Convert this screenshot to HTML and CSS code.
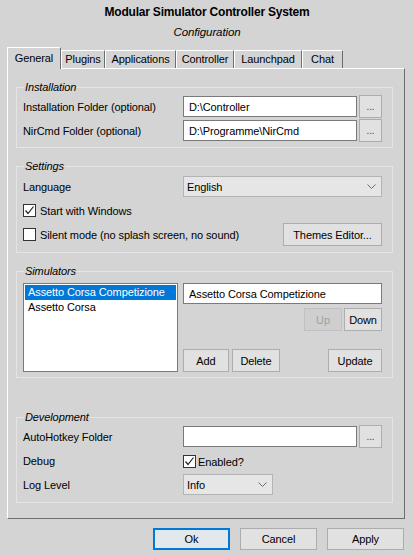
FILE: index.html
```html
<!DOCTYPE html>
<html>
<head>
<meta charset="utf-8">
<title>Configuration</title>
<link rel="stylesheet" href="styles.css">
</head>
<body>
<div class="window">
  <div class="title">Modular Simulator Controller System</div>
  <div class="subtitle">Configuration</div>
  <div class="tabs">
    <div class="tab active t-general">General</div>
    <div class="tab t-plugins">Plugins</div>
    <div class="tab t-apps">Applications</div>
    <div class="tab t-controller">Controller</div>
    <div class="tab t-launchpad">Launchpad</div>
    <div class="tab t-chat">Chat</div>
  </div>
  <div class="panel">
    <fieldset class="group g-install">
      <legend>Installation</legend>
      <div class="rows">
        <div class="row">
          <span class="label">Installation Folder (optional)</span>
          <div class="path">
            <input class="text path-input" value="D:\Controller" readonly>
            <button class="btn browse">...</button>
          </div>
        </div>
        <div class="row">
          <span class="label">NirCmd Folder (optional)</span>
          <div class="path">
            <input class="text path-input" value="D:\Programme\NirCmd" readonly>
            <button class="btn browse">...</button>
          </div>
        </div>
      </div>
    </fieldset>

    <fieldset class="group g-settings">
      <legend>Settings</legend>
      <div class="rows">
        <div class="row">
          <span class="label">Language</span>
          <div class="select">
            <span>English</span>
            <svg class="chev" width="9" height="5" viewBox="0 0 9 5"><polyline points="0.5,0.5 4.5,4.5 8.5,0.5" fill="none" stroke="#6b6b6b" stroke-width="1"/></svg>
          </div>
        </div>
        <div class="row-free">
          <label class="checkline">
            <span class="check"><svg width="11" height="11" viewBox="0 0 11 11"><polyline points="1.5,5.5 4,8.5 9.5,1.5" fill="none" stroke="#222" stroke-width="1.2"/></svg></span>
            <span>Start with Windows</span>
          </label>
        </div>
        <div class="row-free">
          <label class="checkline">
            <span class="check"></span>
            <span>Silent mode (no splash screen, no sound)</span>
          </label>
          <button class="btn themes">Themes Editor...</button>
        </div>
      </div>
    </fieldset>

    <fieldset class="group g-sims">
      <legend>Simulators</legend>
      <div class="sims">
        <div class="listbox">
          <div class="item selected">Assetto Corsa Competizione</div>
          <div class="item">Assetto Corsa</div>
        </div>
        <div class="sim-side">
          <input class="text sim-input" value="Assetto Corsa Competizione" readonly>
          <div class="updown">
            <button class="btn small disabled">Up</button>
            <button class="btn small">Down</button>
          </div>
          <div class="actions">
            <button class="btn add">Add</button>
            <button class="btn del">Delete</button>
            <button class="btn upd">Update</button>
          </div>
        </div>
      </div>
    </fieldset>

    <fieldset class="group g-dev">
      <legend>Development</legend>
      <div class="rows">
        <div class="row">
          <span class="label">AutoHotkey Folder</span>
          <div class="path">
            <input class="text path-input" value="" readonly>
            <button class="btn browse">...</button>
          </div>
        </div>
        <div class="row">
          <span class="label">Debug</span>
          <label class="checkline tight">
            <span class="check"><svg width="11" height="11" viewBox="0 0 11 11"><polyline points="1.5,5.5 4,8.5 9.5,1.5" fill="none" stroke="#222" stroke-width="1.2"/></svg></span>
            <span>Enabled?</span>
          </label>
        </div>
        <div class="row">
          <span class="label">Log Level</span>
          <div class="select short">
            <span>Info</span>
            <svg class="chev" width="9" height="5" viewBox="0 0 9 5"><polyline points="0.5,0.5 4.5,4.5 8.5,0.5" fill="none" stroke="#6b6b6b" stroke-width="1"/></svg>
          </div>
        </div>
      </div>
    </fieldset>
  </div>
  <div class="footer">
    <button class="btn foot default">Ok</button>
    <button class="btn foot">Cancel</button>
    <button class="btn foot">Apply</button>
  </div>
</div>
</body>
</html>
```
FILE: styles.css
```css
* { box-sizing: border-box; }
html, body { margin: 0; padding: 0; }
body {
  background: #d4d4d4;
  font-family: "Liberation Sans", Arial, sans-serif;
  font-size: 11px;
  letter-spacing: -0.1px;
  color: #000;
  width: 414px;
  height: 556px;
  overflow: hidden;
}
.window { display: flex; flex-direction: column; padding-top: 5px; }
.title {
  font-weight: bold;
  font-size: 12px;
  line-height: 14px;
  text-align: center;
  letter-spacing: -0.2px;
}
.subtitle {
  font-style: italic;
  font-size: 11.5px;
  line-height: 14px;
  text-align: center;
  margin-top: 6px;
}
.tabs {
  display: flex;
  align-items: flex-end;
  height: 21px;
  margin: 8px 0 0 7px;
}
.tab {
  height: 18px;
  line-height: 17px;
  text-align: center;
  border-top: 1px solid #fff;
  border-left: 1px solid #fff;
  border-right: 1px solid #6e6e6e;
  background: #d4d4d4;
}
.tab.active {
  height: 22px;
  line-height: 20px;
  margin-bottom: -1px;
  position: relative;
  z-index: 1;
}
.t-general { width: 54px; }
.t-plugins { width: 44px; }
.t-apps { width: 71px; }
.t-controller { width: 58px; }
.t-launchpad { width: 68px; }
.t-chat { width: 41px; }

.panel {
  margin: 0 9px 0 7px;
  height: 451px;
  border-top: 1px solid #fff;
  border-left: 1px solid #fff;
  border-right: 1px solid #6e6e6e;
  border-bottom: 1px solid #6e6e6e;
  padding: 11px 11px 0 8px;
  display: flex;
  flex-direction: column;
}
.group {
  margin: 0;
  min-width: 0;
  border: 1px solid #e4e4e4;
  padding: 0 10px 0 6px;
}
.group legend {
  font-style: italic;
  line-height: 14px;
  padding: 0 1px;
  margin-left: 1px;
}
.g-install { padding-top: 1px; padding-bottom: 5px; }
.g-settings { margin-top: 11px; padding-top: 2px; padding-bottom: 6px; }
.g-sims { margin-top: 11px; padding-top: 5px; padding-bottom: 5px; }
.g-dev { margin-top: 32px; padding-top: 1px; padding-bottom: 6px; }

.rows { display: flex; flex-direction: column; gap: 1px; }
.row {
  display: grid;
  grid-template-columns: 160px 199px;
  align-items: center;
  height: 23px;
}
.row-free {
  display: flex;
  align-items: center;
  justify-content: space-between;
  height: 23px;
}
.label { white-space: nowrap; }

.path { display: flex; align-items: center; gap: 2px; }
.text {
  height: 21px;
  border: 1px solid #7a7a7a;
  background: #fff;
  padding: 0 5px;
  font: inherit;
  letter-spacing: inherit;
  color: #000;
  outline: none;
  margin: 0;
}
.path-input { width: 174px; }

.btn {
  font: inherit;
  letter-spacing: inherit;
  color: #000;
  background: #e1e1e1;
  border: 1px solid #adadad;
  padding: 0;
  margin: 0;
  height: 23px;
}
.browse { width: 23px; color: #444; font-size: 10px; }
.themes { width: 99px; }

.select {
  height: 21px;
  border: 1px solid #b4b4b4;
  background: #e6e6e6;
  display: flex;
  align-items: center;
  justify-content: space-between;
  padding: 0 5px 0 3px;
}
.select.short { width: 90px; }

.checkline { display: flex; align-items: center; gap: 4px; }
.checkline.tight { gap: 2px; padding-top: 2px; }
.check {
  width: 13px;
  height: 13px;
  border: 1px solid #333;
  background: #fff;
  display: flex;
  align-items: center;
  justify-content: center;
  flex: none;
}

.sims {
  display: grid;
  grid-template-columns: 155px 199px;
  column-gap: 5px;
  height: 89px;
}
.listbox {
  border: 1px solid #7a7a7a;
  background: #fff;
  padding: 1px;
}
.item { line-height: 15px; padding-left: 3px; white-space: nowrap; }
.item.selected { background: #0078d7; color: #fff; }
.sim-side { display: flex; flex-direction: column; }
.sim-input { width: 199px; }
.updown { display: flex; justify-content: flex-end; gap: 2px; margin-top: 4px; }
.small { width: 38px; }
.btn.disabled { color: #a0a0a0; background: #cfcfcf; border-color: #c0c0c0; }
.actions { display: flex; margin-top: auto; }
.add { width: 46px; }
.del { width: 48px; margin-left: 3px; }
.upd { width: 54px; margin-left: auto; }

.footer {
  display: flex;
  justify-content: flex-end;
  gap: 10px;
  margin: 9px 10px 0 0;
}
.btn.foot { width: 77px; height: 22px; }
.btn.default {
  border-color: #0078d7;
  box-shadow: inset 0 0 0 1px #0078d7;
  background: #e3e8ec;
}
```
